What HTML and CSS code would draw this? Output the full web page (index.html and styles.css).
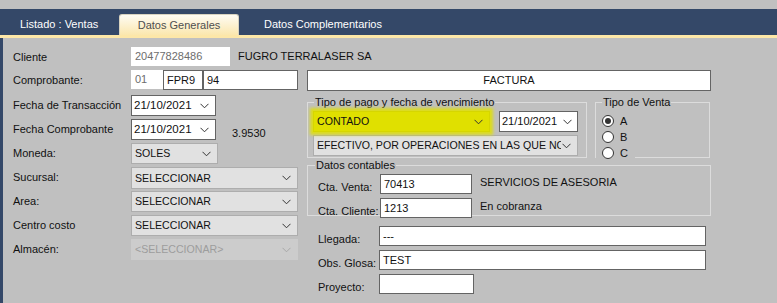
FILE: index.html
```html
<!DOCTYPE html>
<html lang="es">
<head>
  <meta charset="UTF-8">
  <title>Ventas - Datos Generales</title>
  <link rel="stylesheet" href="styles.css">
</head>
<body>
  <div class="topstrip"></div>
  <div class="tabbar">
    <div class="tab first">Listado : Ventas</div>
    <div class="tab active">Datos Generales</div>
    <div class="tab last">Datos Complementarios</div>
  </div>
  <div class="tabline"></div>

  <div class="main">
    <div class="left-col">
      <div class="row r-cliente">
        <label>Cliente</label>
        <div class="box plain w99">20477828486</div>
        <span class="info">FUGRO TERRALASER SA</span>
      </div>
      <div class="row r-comp">
        <label>Comprobante:</label>
        <div class="box plain w31">01</div>
        <div class="box text w39">FPR9</div>
        <div class="box text w95">94</div>
      </div>
      <div class="row">
        <label>Fecha de Transacción</label>
        <div class="box date w85"><span>21/10/2021</span><svg class="chev" width="9" height="6" viewBox="0 0 9 6"><polyline points="0.5,0.8 4.5,4.8 8.5,0.8"/></svg></div>
      </div>
      <div class="row">
        <label>Fecha Comprobante</label>
        <div class="box date w85"><span>21/10/2021</span><svg class="chev" width="9" height="6" viewBox="0 0 9 6"><polyline points="0.5,0.8 4.5,4.8 8.5,0.8"/></svg></div>
        <span class="rate">3.9530</span>
      </div>
      <div class="row">
        <label>Moneda:</label>
        <div class="box combo w87"><span>SOLES</span><svg class="chev" width="9" height="6" viewBox="0 0 9 6"><polyline points="0.5,0.8 4.5,4.8 8.5,0.8"/></svg></div>
      </div>
      <div class="row">
        <label>Sucursal:</label>
        <div class="box combo w167 tall"><span>SELECCIONAR</span><svg class="chev" width="9" height="6" viewBox="0 0 9 6"><polyline points="0.5,0.8 4.5,4.8 8.5,0.8"/></svg></div>
      </div>
      <div class="row">
        <label>Area:</label>
        <div class="box combo w167"><span>SELECCIONAR</span><svg class="chev" width="9" height="6" viewBox="0 0 9 6"><polyline points="0.5,0.8 4.5,4.8 8.5,0.8"/></svg></div>
      </div>
      <div class="row">
        <label>Centro costo</label>
        <div class="box combo w167"><span>SELECCIONAR</span><svg class="chev" width="9" height="6" viewBox="0 0 9 6"><polyline points="0.5,0.8 4.5,4.8 8.5,0.8"/></svg></div>
      </div>
      <div class="row">
        <label>Almacén:</label>
        <div class="box combo disabled w167"><span>&lt;SELECCIONAR&gt;</span><svg class="chev" width="9" height="6" viewBox="0 0 9 6"><polyline points="0.5,0.8 4.5,4.8 8.5,0.8"/></svg></div>
      </div>
    </div>

    <div class="right-col">
      <div class="doc-type">FACTURA</div>

      <div class="group-row">
        <fieldset class="group pago">
          <legend>Tipo de pago y fecha de vencimiento</legend>
          <div class="pago-line">
            <div class="box combo marked w177"><span>CONTADO</span><svg class="chev" width="9" height="6" viewBox="0 0 9 6"><polyline points="0.5,0.8 4.5,4.8 8.5,0.8"/></svg></div>
            <div class="box date small w79"><span>21/10/2021</span><svg class="chev" width="9" height="6" viewBox="0 0 9 6"><polyline points="0.5,0.8 4.5,4.8 8.5,0.8"/></svg></div>
          </div>
          <div class="box combo w265"><span class="clip">EFECTIVO, POR OPERACIONES EN LAS QUE NO</span><svg class="chev" width="9" height="6" viewBox="0 0 9 6"><polyline points="0.5,0.8 4.5,4.8 8.5,0.8"/></svg></div>
        </fieldset>

        <fieldset class="group venta">
          <legend>Tipo de Venta</legend>
          <div class="radio checked"><span class="dot"></span>A</div>
          <div class="radio"><span class="dot"></span>B</div>
          <div class="radio last"><span class="dot"></span>C</div>
        </fieldset>
      </div>

      <fieldset class="group contables">
        <legend>Datos contables</legend>
        <div class="crow">
          <label>Cta. Venta:</label>
          <div class="box text w92">70413</div>
          <span class="info">SERVICIOS DE ASESORIA</span>
        </div>
        <div class="crow">
          <label>Cta. Cliente:</label>
          <div class="box text w92">1213</div>
          <span class="info">En cobranza</span>
        </div>
      </fieldset>

      <div class="extra">
        <div class="crow">
          <label>Llegada:</label>
          <div class="box text w327">---</div>
        </div>
        <div class="crow">
          <label>Obs. Glosa:</label>
          <div class="box text w327">TEST</div>
        </div>
        <div class="crow">
          <label>Proyecto:</label>
          <div class="box text w95"></div>
        </div>
      </div>
    </div>
  </div>
</body>
</html>
```

FILE: styles.css
```css
* {
  box-sizing: border-box;
}
body {
  margin: 0;
  background-color: #c0c0c0;
  font-family: "Liberation Sans", Arial, sans-serif;
  font-size: 11px;
  color: #111;
  height: 303px;
  overflow: hidden;
}
.topstrip {
  height: 9px;
}
.tabbar {
  height: 26px;
  background-color: #344868;
  display: flex;
  align-items: flex-end;
}
.tab {
  height: 21px;
  line-height: 20px;
  color: #fff;
  font-size: 11px;
  white-space: nowrap;
}
.tab.first {
  padding: 0 20px;
  width: 119px;
}
.tab.active {
  width: 120px;
  text-align: center;
  color: #4f4f4f;
  background: linear-gradient(#fefcf4, #fbe7ae);
  border: 1px solid #d8d3c0;
  border-bottom: none;
  border-radius: 3px 3px 0 0;
}
.tab.last {
  padding-left: 25px;
}
.tabline {
  height: 3px;
  background-color: #fde7a8;
}
.main {
  display: flex;
  height: 265px;
  border-left: 3px solid #344868;
}

/* left column */
.left-col {
  width: 304px;
  flex: none;
  padding: 9px 0 0 10px;
}
.row {
  display: flex;
  align-items: flex-start;
  height: 24px;
}
.row.r-cliente {
  height: 23px;
}
.row.r-comp {
  height: 25px;
}
.row label,
.crow label {
  line-height: 21px;
}
.row label {
  width: 118px;
  flex: none;
}
.box {
  height: 21px;
  line-height: 19px;
  padding: 0 3px;
  border: 1px solid #7a7a7a;
  background: #fff;
  white-space: nowrap;
  flex: none;
  display: flex;
  align-items: center;
  justify-content: space-between;
}
.box.plain {
  height: 19px;
  border-color: #fff;
  color: #6d6d6d;
  padding-left: 3px;
}
.box.text {
  height: 20px;
  border-color: #646464;
  padding-left: 3px;
}
.box.date {
  border-color: #646464;
  padding: 0 6px 0 2px;
  font-size: 11.5px;
}
.box.date.small {
  font-size: 11px;
  padding-right: 5px;
}
.box.combo {
  background: #e1e1e1;
  border-color: #adadad;
  padding: 0 6px 0 3px;
  font-size: 10.6px;
}
.box.combo.tall {
  height: 22px;
}
.box.combo.disabled {
  background: #cccccc;
  border-color: #cccccc;
  color: #9d9d9d;
}
.box.combo.disabled .chev polyline {
  stroke: #a8a8a8;
}
.box.marked {
  background: #e0e000;
  border-color: #d6d600;
  box-shadow: 0 0 3px 3px rgba(224, 224, 0, 0.85);
}
.chev {
  flex: none;
}
.chev polyline {
  fill: none;
  stroke: #333;
  stroke-width: 1;
}
.w31 { width: 32px; }
.w39 { width: 40px; }
.w79 { width: 79px; }
.w85 { width: 85px; }
.w87 { width: 87px; }
.w92 { width: 92px; }
.w95 { width: 95px; }
.w99 { width: 99px; }
.w167 { width: 167px; }
.w177 { width: 177px; }
.w265 { width: 265px; }
.w327 { width: 327px; }
.info {
  margin-left: 8px;
  line-height: 19px;
  white-space: nowrap;
}
.rate {
  margin-left: 16px;
  margin-top: 8px;
}

/* right column */
.right-col {
  width: 404px;
  flex: none;
  padding-top: 32px;
}
.doc-type {
  height: 21px;
  line-height: 19px;
  text-align: center;
  background: #fff;
  border: 1px solid #646464;
}
.group-row {
  display: flex;
  gap: 8px;
  margin-top: 5px;
}
.group {
  margin: 0;
  border: 1px solid #dcdcdc;
  min-width: 0;
}
.group legend {
  margin-left: 6px;
  padding: 0 1px;
  line-height: 13px;
}
.pago {
  width: 280px;
  padding: 2px 8px 1px 5px;
  height: 62px;
}
.pago legend {
  margin-left: 1px;
}
.pago-line {
  display: flex;
  gap: 9px;
  margin-bottom: 3px;
}
.clip {
  overflow: hidden;
  width: 244px;
}
.venta {
  width: 115px;
  padding: 4px 0 0 0;
  height: 62px;
}
.radio {
  display: flex;
  align-items: center;
  gap: 6px;
  height: 16px;
  width: 39px;
  padding-left: 6px;
  background: #c0c0c0;
}
.radio.last {
  height: 18px;
  padding-bottom: 2px;
}
.dot {
  width: 12px;
  height: 12px;
  border-radius: 50%;
  border: 1px solid #333;
  background: #fff;
  display: flex;
  align-items: center;
  justify-content: center;
}
.radio.checked .dot::after {
  content: "";
  width: 6px;
  height: 6px;
  border-radius: 50%;
  background: #333;
}
.contables {
  width: 404px;
  margin-top: 1px;
  padding: 2px 0 3px 10px;
  height: 57px;
}
.contables legend {
  margin-left: -3px;
}
.crow {
  display: flex;
  align-items: flex-start;
  height: 24px;
}
.crow label {
  width: 61px;
  flex: none;
  line-height: 26px;
}
.contables .crow label {
  width: 62px;
}
.contables .info {
  line-height: 16px;
}
.extra {
  padding: 10px 0 0 11px;
}
```
